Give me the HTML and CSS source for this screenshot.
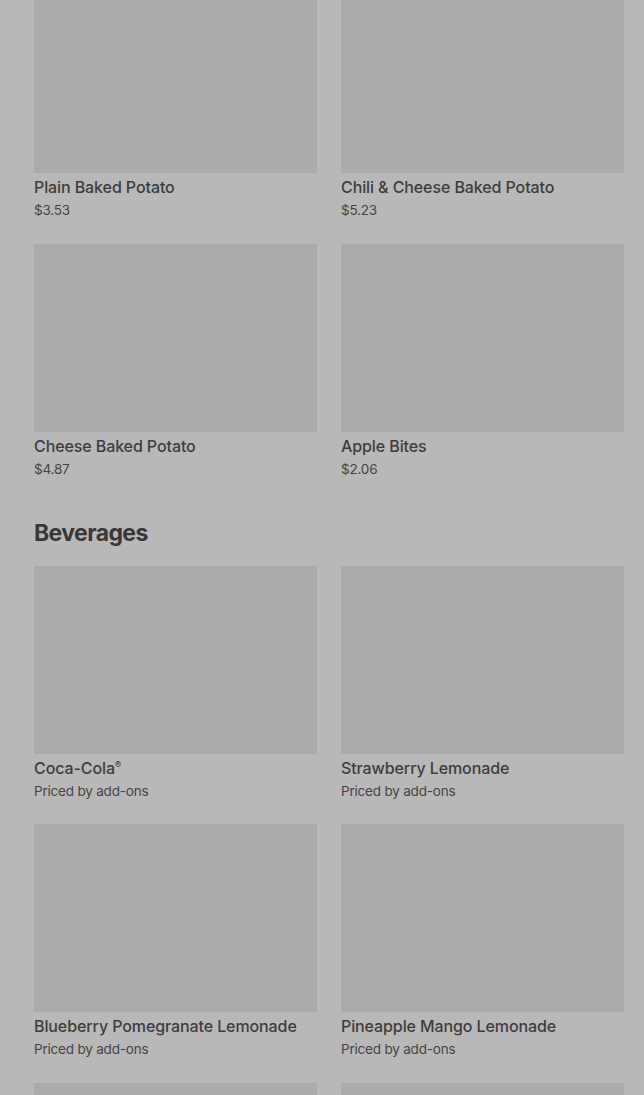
FILE: index.html
```html
<!DOCTYPE html>
<html lang="en">
<head>
    <meta charset="UTF-8">
    <meta name="viewport" content="width=device-width, initial-scale=1.0">
    <title>Menu</title>
    <link rel="stylesheet" href="styles.css">
</head>
<body>
    <div id="menu">
        <section class="menu-section">
            <div class="item-grid">
                <div class="item">
                    <div class="item-image"></div>
                    <div class="item-title">Plain Baked Potato</div>
                    <div class="item-price">$3.53</div>
                </div>
                <div class="item">
                    <div class="item-image"></div>
                    <div class="item-title">Chili &amp; Cheese Baked Potato</div>
                    <div class="item-price">$5.23</div>
                </div>
                <div class="item">
                    <div class="item-image"></div>
                    <div class="item-title">Cheese Baked Potato</div>
                    <div class="item-price">$4.87</div>
                </div>
                <div class="item">
                    <div class="item-image"></div>
                    <div class="item-title">Apple Bites</div>
                    <div class="item-price">$2.06</div>
                </div>
            </div>
        </section>

        <section class="menu-section">
            <h2 class="section-title">Beverages</h2>
            <div class="item-grid">
                <div class="item">
                    <div class="item-image"></div>
                    <div class="item-title">Coca-Cola<sup>®</sup></div>
                    <div class="item-price">Priced by add-ons</div>
                </div>
                <div class="item">
                    <div class="item-image"></div>
                    <div class="item-title">Strawberry Lemonade</div>
                    <div class="item-price">Priced by add-ons</div>
                </div>
                <div class="item">
                    <div class="item-image"></div>
                    <div class="item-title">Blueberry Pomegranate Lemonade</div>
                    <div class="item-price">Priced by add-ons</div>
                </div>
                <div class="item">
                    <div class="item-image"></div>
                    <div class="item-title">Pineapple Mango Lemonade</div>
                    <div class="item-price">Priced by add-ons</div>
                </div>
                <!-- next row, only the top of the pictures is in view -->
                <div class="item">
                    <div class="item-image"></div>
                </div>
                <div class="item">
                    <div class="item-image"></div>
                </div>
            </div>
        </section>
    </div>
</body>
</html>
```

FILE: styles.css
```css
body {
    margin: 0;
    padding: 0;
    background-color: #b8b8b8;
    font-family: Inter, Roboto, "Liberation Sans", sans-serif;
    color: #3c3c3c;
    height: 100vh;
    overflow: hidden;
}
#menu {
    padding: 0 20px 0 34px;
    margin-top: -15px;
}
.menu-section { margin-bottom: 38px; }
.section-title {
    margin: 0 0 17px 0;
    font-size: 23px;
    line-height: 32px;
    font-weight: 700;
    letter-spacing: -0.6px;
    color: #383838;
}
.item-grid {
    display: grid;
    grid-template-columns: 1fr 1fr;
    column-gap: 24px;
    row-gap: 23.5px;
}
.item-image {
    height: 188px;
    background-color: #ababab;
}
.item-title {
    margin-top: 4px;
    font-size: 16px;
    line-height: 20px;
    font-weight: 500;
    letter-spacing: -0.1px;
    color: #3d3d3d;
}
.item-title sup {
    font-size: 9px;
    line-height: 0;
}
.item-price {
    margin-top: 3px;
    font-size: 13.5px;
    line-height: 20px;
    font-weight: 400;
    letter-spacing: -0.2px;
    color: #454545;
}
```
